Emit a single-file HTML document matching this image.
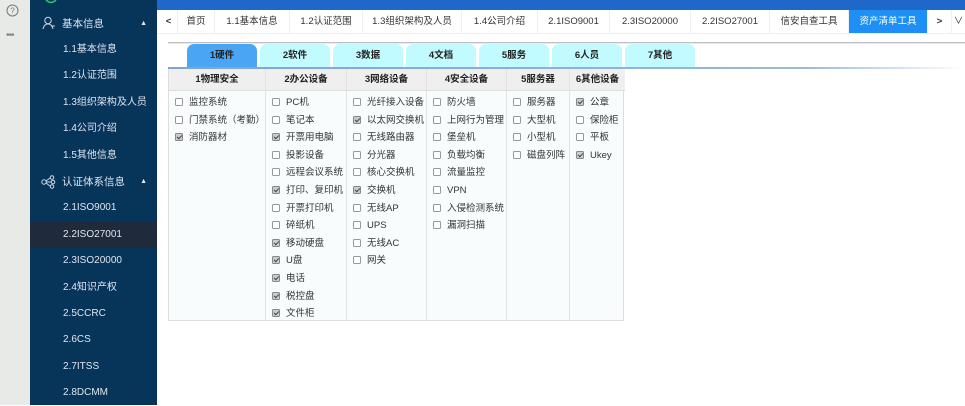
<!DOCTYPE html><html><head><meta charset="utf-8"><style>
*{margin:0;padding:0;box-sizing:border-box}
body{width:965px;height:405px;overflow:hidden;position:relative;background:#fff;font-family:"Liberation Sans","Noto Sans CJK SC",sans-serif;font-size:10px;color:#333}
.rail{position:absolute;left:0;top:0;width:30px;height:405px;background:#e8eae8}
.nav{position:absolute;left:30px;top:0;width:127px;height:405px;background:#073459}
.nav div{position:absolute;left:0;width:127px;height:26px;line-height:26px;color:#dfe6ee;font-size:10px}
.nav .sub{padding-left:33px}
.nav .grp{padding-left:32px;font-size:10.5px}
.top{position:absolute;left:157px;top:0;width:808px;height:10px;background:#1f67c8}
.tabs{position:absolute;left:157px;top:10px;width:808px;height:24px;background:#fff;border-bottom:1px solid #eee}
.tabs span{position:absolute;top:0;height:23px;line-height:23px;text-align:center;font-size:9.5px;color:#333;border-right:1px solid #f0f0f0}
.sh{position:absolute;left:168px;top:42px;width:797px;height:2px;background:linear-gradient(#aaa,#fff)}
.t{position:absolute;top:44px;height:24px;width:70px;background:#c2fbff;border-radius:7px 7px 0 0;text-align:center;line-height:24px;font-weight:bold;font-size:9.5px;color:#222}
.t.a{background:#4aa6f5}
.line{position:absolute;left:168px;top:67px;width:797px;height:2px;background:linear-gradient(90deg,#7ea4d0,#9bb8dc 80%,#fff)}
.tbl{position:absolute;left:168px;top:69px;height:252px;border:1px solid #ddd;border-top:none;background:#f8fcfd}
.col{position:absolute;top:0;height:251px;border-right:1px solid #e2e2e2}
.col .h{height:22px;line-height:22px;background:#efefef;text-align:center;font-weight:bold;font-size:9.5px;border-bottom:1px solid #ddd;color:#222}
.col .r{height:17.6px;line-height:17.6px;padding-left:6px;font-size:9.5px;white-space:nowrap;color:#333}
.col .h + .r{margin-top:3px}
.cb{display:inline-block;width:8px;height:8px;border:1px solid #999;border-radius:1.5px;background:#fff;vertical-align:-1px;margin-right:6px;position:relative}
.ck{background:#ccc;border-color:#888}
.ck:after{content:"";position:absolute;left:2px;top:0px;width:2px;height:4px;border:solid #444;border-width:0 1.2px 1.2px 0;transform:rotate(45deg)}
</style></head><body>
<div class="rail">
<svg style="position:absolute;left:6px;top:4px" width="13" height="13"><circle cx="6.5" cy="6.5" r="5.5" fill="none" stroke="#777" stroke-width="1"/><text x="6.5" y="9.5" font-size="8" text-anchor="middle" fill="#777" font-family="Liberation Sans">?</text></svg>
<div style="position:absolute;left:6px;top:30px;color:#888;font-size:10px;letter-spacing:-1px">•••</div>
</div>
<div class="nav">
<svg style="position:absolute;left:14px;top:0" width="14" height="6"><path d="M2 0 Q7 5 12 0" fill="none" stroke="#2ecc71" stroke-width="1.5"/></svg>
<svg style="position:absolute;left:12px;top:16px" width="14" height="14"><circle cx="6" cy="4.5" r="3.2" fill="none" stroke="#cfd8e2"/><path d="M1 13 Q2 8 6 8 Q10 8 11 13" fill="none" stroke="#cfd8e2"/><path d="M9 10h4" stroke="#cfd8e2"/></svg>
<div class="grp" style="top:11px">基本信息<span style="position:absolute;right:10px;font-size:7px">▲</span></div>
<div class="sub" style="top:37px">1.1基本信息</div>
<div class="sub" style="top:63px">1.2认证范围</div>
<div class="sub" style="top:90px">1.3组织架构及人员</div>
<div class="sub" style="top:116px">1.4公司介绍</div>
<div class="sub" style="top:143px">1.5其他信息</div>
<svg style="position:absolute;left:11px;top:175px" width="15" height="14"><circle cx="3" cy="7" r="2.2" fill="none" stroke="#cfd8e2"/><circle cx="11" cy="2.5" r="1.8" fill="none" stroke="#cfd8e2"/><circle cx="12" cy="7" r="1.8" fill="none" stroke="#cfd8e2"/><circle cx="11" cy="11.5" r="1.8" fill="none" stroke="#cfd8e2"/><path d="M5 6L9 3M5 7h5M5 8l4 3" stroke="#cfd8e2"/></svg>
<div class="grp" style="top:169px">认证体系信息<span style="position:absolute;right:10px;font-size:7px">▲</span></div>
<div class="sub" style="top:195px">2.1ISO9001</div>
<div class="sub" style="top:222px;background:#1f2a3a">2.2ISO27001</div>
<div class="sub" style="top:248px">2.3ISO20000</div>
<div class="sub" style="top:275px">2.4知识产权</div>
<div class="sub" style="top:301px">2.5CCRC</div>
<div class="sub" style="top:327px">2.6CS</div>
<div class="sub" style="top:354px">2.7ITSS</div>
<div class="sub" style="top:380px">2.8DCMM</div>
</div>
<div class="top"></div>
<div class="tabs">
<span style="left:3px;width:18px;font-weight:bold">&lt;</span>
<span style="left:21px;width:37px">首页</span>
<span style="left:58px;width:75px">1.1基本信息</span>
<span style="left:133px;width:73px">1.2认证范围</span>
<span style="left:206px;width:99px">1.3组织架构及人员</span>
<span style="left:305px;width:76px">1.4公司介绍</span>
<span style="left:381px;width:72px">2.1ISO9001</span>
<span style="left:453px;width:81px">2.3ISO20000</span>
<span style="left:534px;width:79px">2.2ISO27001</span>
<span style="left:613px;width:79px">信安自查工具</span>
<span style="left:692px;width:79px;background:#1e90f5;color:#fff">资产清单工具</span>
<span style="left:771px;width:24px;font-weight:bold">&gt;</span>
<span style="left:795px;width:13px;border:none">∨</span>
</div>
<div class="sh"></div>
<div class="t a" style="left:187px">1硬件</div>
<div class="t" style="left:260px">2软件</div>
<div class="t" style="left:333px">3数据</div>
<div class="t" style="left:406px">4文档</div>
<div class="t" style="left:479px">5服务</div>
<div class="t" style="left:552px">6人员</div>
<div class="t" style="left:625px">7其他</div>
<div class="line"></div>
<div class="tbl" style="width:456px">
<div class="col" style="left:0;width:97px"><div class="h">1物理安全</div>
<div class="r"><i class="cb"></i>监控系统</div><div class="r"><i class="cb"></i>门禁系统（考勤）</div><div class="r"><i class="cb ck"></i>消防器材</div></div>
<div class="col" style="left:97px;width:81px"><div class="h">2办公设备</div>
<div class="r"><i class="cb"></i>PC机</div><div class="r"><i class="cb"></i>笔记本</div><div class="r"><i class="cb ck"></i>开票用电脑</div><div class="r"><i class="cb"></i>投影设备</div><div class="r"><i class="cb"></i>远程会议系统</div><div class="r"><i class="cb ck"></i>打印、复印机</div><div class="r"><i class="cb"></i>开票打印机</div><div class="r"><i class="cb"></i>碎纸机</div><div class="r"><i class="cb ck"></i>移动硬盘</div><div class="r"><i class="cb ck"></i>U盘</div><div class="r"><i class="cb ck"></i>电话</div><div class="r"><i class="cb ck"></i>税控盘</div><div class="r"><i class="cb ck"></i>文件柜</div></div>
<div class="col" style="left:178px;width:80px"><div class="h">3网络设备</div>
<div class="r"><i class="cb"></i>光纤接入设备</div><div class="r"><i class="cb ck"></i>以太网交换机</div><div class="r"><i class="cb"></i>无线路由器</div><div class="r"><i class="cb"></i>分光器</div><div class="r"><i class="cb"></i>核心交换机</div><div class="r"><i class="cb ck"></i>交换机</div><div class="r"><i class="cb"></i>无线AP</div><div class="r"><i class="cb"></i>UPS</div><div class="r"><i class="cb"></i>无线AC</div><div class="r"><i class="cb"></i>网关</div></div>
<div class="col" style="left:258px;width:80px"><div class="h">4安全设备</div>
<div class="r"><i class="cb"></i>防火墙</div><div class="r"><i class="cb"></i>上网行为管理</div><div class="r"><i class="cb"></i>堡垒机</div><div class="r"><i class="cb"></i>负载均衡</div><div class="r"><i class="cb"></i>流量监控</div><div class="r"><i class="cb"></i>VPN</div><div class="r"><i class="cb"></i>入侵检测系统</div><div class="r"><i class="cb"></i>漏洞扫描</div></div>
<div class="col" style="left:338px;width:63px"><div class="h">5服务器</div>
<div class="r"><i class="cb"></i>服务器</div><div class="r"><i class="cb"></i>大型机</div><div class="r"><i class="cb"></i>小型机</div><div class="r"><i class="cb"></i>磁盘列阵</div></div>
<div class="col" style="left:401px;width:55px;border-right:none"><div class="h">6其他设备</div>
<div class="r"><i class="cb ck"></i>公章</div><div class="r"><i class="cb"></i>保险柜</div><div class="r"><i class="cb"></i>平板</div><div class="r"><i class="cb ck"></i>Ukey</div></div>
</div>
</body></html>
